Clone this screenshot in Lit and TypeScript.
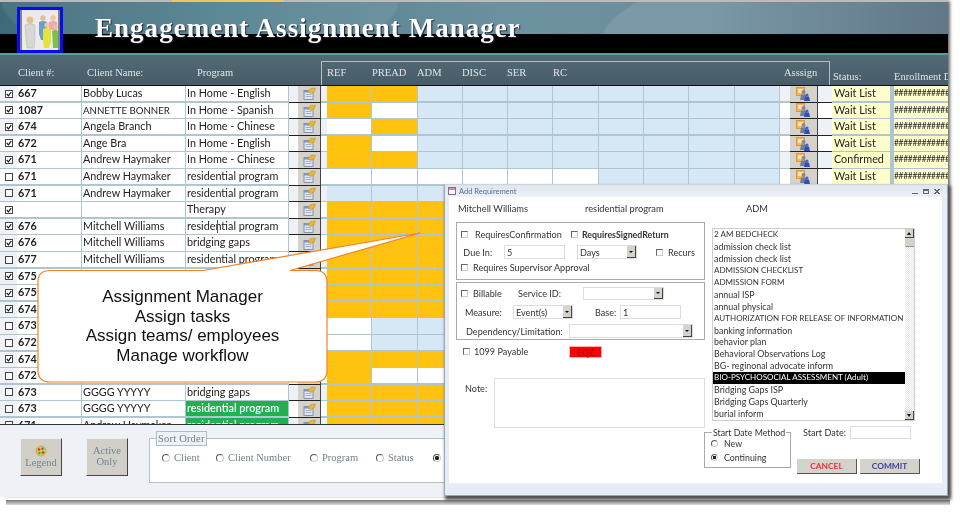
import { LitElement, html, css, svg } from "lit";
import { customElement } from "lit/decorators.js";

type R = [boolean, string, string, string, string, boolean?];
const rows: R[] = [
  [true, "667", "Bobby Lucas", "In Home - English", "oobbbbbbbb"],
  [true, "1087", "ANNETTE BONNER", "In Home - Spanish", "owbbbbbbbb"],
  [true, "674", "Angela Branch", "In Home - Chinese", "wobbbbbbbb"],
  [true, "672", "Ange Bra", "In Home - English", "owbbbbbbbb"],
  [true, "671", "Andrew Haymaker", "In Home - Chinese", "oobbbbbbbb"],
  [false, "671", "Andrew Haymaker", "residential program", "wwwwwwbbbb"],
  [false, "671", "Andrew Haymaker", "residential program", "bbbbbbbbbb"],
  [true, "", "", "Therapy", "oooooooooo"],
  [true, "676", "Mitchell Williams", "residential program", "oooooooooo"],
  [true, "676", "Mitchell Williams", "bridging gaps", "oooooooooo"],
  [false, "677", "Mitchell Williams", "residential program", "oooooooooo"],
  [true, "675", "", "", "oooooooooo"],
  [true, "675", "", "", "oooooooooo"],
  [true, "674", "", "", "oooooooooo"],
  [false, "673", "", "", "wbbbbbbbbb"],
  [false, "672", "", "", "wbbbbbbbbb"],
  [true, "674", "", "", "oooooooooo"],
  [false, "672", "", "", "owwwwwwwww"],
  [false, "673", "GGGG YYYYY", "bridging gaps", "oooooooooo"],
  [false, "673", "GGGG YYYYY", "residential program", "oooooooooo", true],
  [false, "671", "Andrew Haymaker", "residential program", "oooooooooo", true],
];

const items = [
  "2 AM BEDCHECK", "admission check list", "admission check list", "ADMISSION CHECKLIST",
  "ADMISSION FORM", "annual ISP", "annual physical", "AUTHORIZATION FOR RELEASE OF INFORMATION",
  "banking information", "behavior plan", "Behavioral Observations Log", "BG- reginonal advocate inform",
  "BIO-PSYCHOSOCIAL ASSESSMENT (Adult)", "Bridging Gaps ISP", "Bridging Gaps Quarterly", "burial inform",
];
const isCaps = (t: string) => t.length > 12 && (t === t.toUpperCase() || t.startsWith("BIO"));

const noteIcon = svg`<svg width="13" height="13" viewBox="0 0 13 13">
  <rect x="1" y="3.500" width="9" height="9" fill="#dfe6f2" stroke="#6d80a8" stroke-width=".8"/>
  <rect x="1" y="3.500" width="9" height="2" fill="#7f95c4"/>
  <path d="M2.500 7.500h6M2.500 9.500h6" stroke="#93a3c4" stroke-width=".8"/>
  <path d="M5 5 L7.500 1.500 L12.500 1 L11.500 4.500 L8 6.500 Z" fill="#e8b92a" stroke="#a98614" stroke-width=".4"/>
</svg>`;

const assignIcon = svg`<svg width="14" height="14" viewBox="0 0 14 14">
  <rect x="0.500" y="0.500" width="8" height="8" fill="#f6b457" stroke="#e08a26" stroke-width=".8"/>
  <rect x="2" y="2" width="5" height="4" fill="#fde2b4"/>
  <circle cx="7.500" cy="5" r="2" fill="#7d8aa0"/>
  <path d="M4 13 L5 7.500 H10 L11 13 Z" fill="#6f7f99"/>
  <circle cx="11" cy="8" r="1.500" fill="#3f5fc9"/>
  <path d="M8 14 L9 9.500 H13 L14 14 Z" fill="#2e4cc4"/>
</svg>`;

const logo = svg`<svg width="40" height="40" viewBox="0 0 40 40">
  <rect width="40" height="40" fill="#ecebea"/>
  <rect x="0" width="2" height="40" fill="#7f8288"/><rect x="38" width="2" height="40" fill="#7f8288"/>
  <circle cx="10" cy="10" r="3.500" fill="#e8bf94"/>
  <path d="M5 15 Q10 12 15 15 L15 28 L14 38 L7 38 L6 28 Z" fill="#d6d6d4" stroke="#b4b4b2" stroke-width=".5"/>
  <circle cx="23" cy="8" r="2.800" fill="#e8bf94"/>
  <path d="M19 12 Q23 10 27 12 L27 24 L25 30 L21 30 L19 24 Z" fill="#6d9cd2"/>
  <circle cx="33" cy="8" r="2.800" fill="#f0c8a0"/>
  <path d="M29 12 Q33 10 37 12 L37 20 L29 20 Z" fill="#e8a9b0"/>
  <circle cx="27" cy="15" r="2.600" fill="#f0c8a0"/>
  <path d="M23 19 Q27 17 31 19 L31 32 L29 38 L24 38 L23 32 Z" fill="#e4e33c"/>
  <circle cx="35" cy="17" r="2.600" fill="#e8bf94"/>
  <path d="M32 21 Q35 19 38 21 L38 38 L33 38 Z" fill="#79c24f"/>
</svg>`;

const legendIcon = svg`<svg width="12" height="12" viewBox="0 0 12 12">
  <circle cx="6" cy="6" r="5" fill="#e6c44a" stroke="#b7902c" stroke-width=".6"/>
  <circle cx="4" cy="4.500" r="1.300" fill="#d43a2a"/><circle cx="7.500" cy="3.800" r="1.200" fill="#3a6fd4"/>
  <circle cx="4.500" cy="8" r="1.200" fill="#3aa64a"/><circle cx="8" cy="7.500" r="1.300" fill="#8a5a2a"/>
</svg>`;

const check = svg`<svg class="tick" viewBox="0 0 8 8"><path d="M1 4 L3.300 6.500 L7 1.300" fill="none" stroke="#111" stroke-width="1.500"/></svg>`;

@customElement("app-root")
export class AppRoot extends LitElement {
  static styles = css`
    :host { display: block; width: 960px; height: 512px; overflow: hidden; position: relative; background: #fff; font-family: Lato, "Open Sans", sans-serif; color: #222; filter: blur(.3px); }
    * { box-sizing: border-box; }
    .win { width: 948px; height: 497px; display: flex; flex-direction: column; box-shadow: 3px 0 3px -1px #666; }
    .under { position: absolute; left: 6px; top: 500px; width: 944px; height: 5px; background: linear-gradient(#777, #ddd); }
    .top { height: 2px; flex: none; background: linear-gradient(90deg, #bbb 172px, #f1c462 172px, #f1c462 284px, #bbb 284px); }
    .banner { height: 51px; flex: none; display: flex; background:
        linear-gradient(#000, #000) bottom / 100% 19px no-repeat,
        radial-gradient(ellipse 200px 70px at 800px 40px, rgba(255,255,255,.1) 98%, transparent 100%),
        radial-gradient(ellipse 200px 60px at 200px 0, rgba(255,255,255,.07) 98%, transparent 100%),
        linear-gradient(90deg, #3d6a78, #52808e 25%, #6d929f 55%, #6b8c9c 75%, #4e6879); }
    .logo { width: 46px; height: 46px; margin: 5px 0 0 17px; border: 3px solid #0a0af0; line-height: 0; }
    .title { margin: 11px 0 0 32px; font: bold 27px/30px "Liberation Serif", serif; letter-spacing: 1.03px; color: #fff; text-shadow: 1px 1px 1px #223; white-space: nowrap; }
    .rule { height: 2px; flex: none; background: #5f9a9c; }
    .heads { height: 31px; flex: none; background: linear-gradient(#536a75, #475c68); display: grid; grid-template-columns: 18px 69px 110px 124px 509px 1fr; color: #dfe5e8; font: 10.500px "Liberation Serif", serif; border-bottom: 1px solid #111; }
    .heads > div { padding-top: 12px; white-space: nowrap; }
    .heads .box { border: 1px solid #b5c0c6; border-bottom: 0; margin-top: 6px; padding-top: 5px; display: grid; grid-template-columns: 45px 45px 45px 45px 46px 231px 1fr; padding-left: 5px; }
    .heads .box span:last-child { white-space: nowrap; }
    .heads .rest { display: grid; grid-template-columns: 61px 1fr; padding: 16px 0 0 3px; overflow: hidden; }
    .rows { height: 338px; flex: none; overflow: hidden; background: #aec6cf; }
    .row { display: grid; height: 16.6px; grid-template-columns: 17px 65px 104px 103px 9px 23px 6px repeat(10, 45.3px) 10px 28px 14px 58px 4px 1fr; font-size: 10.800px; line-height: 14.6px; white-space: nowrap; }
    .row > div { height: 15.2px; overflow: hidden; }
    .sel { background: #eef1f6; display: flex; align-items: center; justify-content: center; }
    .sel.alt { background: #fff; }
    .cb { width: 8px; height: 8px; border: 1px solid #444; background: #fff; display: block; flex: none; }
    .tick { display: block; width: 6px; height: 6px; }
    .t { background: #fff; padding-left: 1px; margin-right: 1px; }
    .t.cap { font-size: 9.700px; }
    .id { font-weight: 700; }
    .pad { background: #eef1f6; }
    .pad.alt { background: #fff; }
    .pad.ln { border-bottom: 1px solid #222; height: 16.6px !important; }
    .btn { background: #d5d2cc; border-right: 1px solid #444; border-bottom: 1px solid #222; display: flex; justify-content: center; align-items: center; height: 16.6px !important; }
    .o { background: #ffc20e; margin-right: 1px; }
    .w { background: #fff; margin-right: 1px; }
    .b { background: #d6e8f5; margin-right: 1px; }
    .status { background: #ffffcc; padding-left: 2px; }
    .enr { background: #ffffcc; font-size: 8.500px; letter-spacing: -.3px; overflow: hidden; }
    .green { background: #1fb14f; color: #fff; font-weight: 600; }
    .caret { position: absolute; left: 217px; top: 220px; width: 1px; height: 13px; background: #555; }
    .foot { flex: 1; background: #eef1f6; display: flex; align-items: flex-start; padding: 13px 0 0 20px; border-top: 1px solid #333; }
    .fbtn { width: 42px; height: 38px; background: #d2cfc9; border-right: 1px solid #444; border-bottom: 1px solid #444; border-top: 1px solid #eee; border-left: 1px solid #eee; color: #70858f; font: 10.500px/11.500px "Liberation Serif", serif; display: flex; flex-direction: column; align-items: center; justify-content: center; text-align: center; }
    .active { margin-left: 24px; padding-bottom: 2px; }
    fieldset.sort { margin: -7px 0 0 21px; width: 400px; height: 52px; border: 1px solid #b8bec4; background: #fff; padding: 0 0 0 0; }
    fieldset.sort legend { margin-left: 6px; padding: 0 1px; border: 1px solid #a9c0cc; background: #eef1f6; color: #6f7f88; font: 10.500px/13px "Liberation Serif", serif; letter-spacing: .2px; }
    .radios { display: grid; grid-template-columns: 54px 94px 66px 57px 1fr; padding: 6px 0 0 12px; color: #6f7f88; font: 10.500px "Liberation Serif", serif; }
    .radios label { display: flex; align-items: center; gap: 4px; }
    .rd { width: 7px; height: 7px; border-radius: 50%; border: 1px solid #555; border-bottom-color: #ccc; border-right-color: #ccc; background: #fff; flex: none; display: block; }
    .radios .rd { width: 8px; height: 8px; }
    .rd.on { background: radial-gradient(circle, #222 45%, #fff 55%); }

    .callout { position: absolute; left: 0; top: 0; width: 440px; height: 400px; pointer-events: none; }
    .ctext { position: absolute; left: 38px; top: 287px; width: 289px; text-align: center; font: 17px/19.600px "Liberation Sans", sans-serif; color: #111; }

    .modal { position: absolute; left: 444px; top: 184px; width: 504px; height: 312px; background: #e6edf5; border: 1px solid #9aa6b0; border-top-color: #ccd4dc; box-shadow: 2px 3px 3px 1px #555; display: flex; flex-direction: column; font-size: 9.100px; color: #333; }
    .mtitle { height: 12px; flex: none; display: flex; align-items: center; gap: 3px; padding-left: 3px; color: #4f6f9f; font-size: 7.500px; background: linear-gradient(#dfe5ec, #eef2f7); }
    .mico { width: 8px; height: 8px; background: linear-gradient(#c98fb0, #c98fb0 2px, #fff 2px); border: 1px solid #8a6a8a; flex: none; }
    .ctl { margin-left: auto; margin-right: 7px; display: flex; gap: 5px; align-items: center; }
    .ctl i { display: block; width: 6px; height: 5px; }
    .ctl .mn { border-bottom: 1px solid #667; }
    .ctl .mx { border: 1px solid #667; border-top-width: 2px; }
    .ctl .cl { background: linear-gradient(45deg, transparent 44%, #667 44%, #667 56%, transparent 56%), linear-gradient(-45deg, transparent 44%, #667 44%, #667 56%, transparent 56%); }
    .mbody { height: 286px; flex: none; background: #fff; margin: 0 5px 0 4px; display: flex; flex-direction: column; padding-left: 7px; }
    .names { height: 25px; flex: none; display: grid; grid-template-columns: 127px 161px 1fr; padding: 6px 0 0 2px; font-size: 9.300px; }
    .cols { display: flex; }
    .left { width: 249px; flex: none; }
    .right { width: 220px; margin-left: 7px; padding-top: 6px; }
    .grp { border: 1px solid #aaa; height: 58px; padding: 4px 0 0 4px; display: flex; flex-direction: column; }
    .grp + .grp { margin-top: 2px; }
    .r { display: grid; align-items: center; white-space: nowrap; }
    .a1 { grid-template-columns: 14px 96px 11px 1fr; height: 13px; margin-top: 1px; }
    .a2 { grid-template-columns: 43px 61px 12px 60px 19px 12px 1fr; margin-top: 4px; height: 14px; }
    .a3 { grid-template-columns: 12px 1fr; margin-top: 2px; height: 13px; }
    .b1 { grid-template-columns: 12px 45px 65px 81px; height: 13px; }
    .b2 { grid-template-columns: 4px 48px 60px 22px 25px 61px; margin-top: 5px; height: 14px; }
    .b3 { grid-template-columns: 5px 103px 124px; margin-top: 5px; height: 14px; }
    .pay { grid-template-columns: 11px 95px 33px; margin: 5px 0 0 7px; height: 13px; }
    .mb { width: 7px; height: 7px; border: 1px solid #666; border-bottom-color: #ccc; border-right-color: #ccc; background: #fff; display: block; }
    .bold { font-weight: 700; font-size: 8.800px; }
    .in { height: 100%; border: 1px solid #ddd; padding-left: 2px; background: #fff; display: flex; align-items: center; }
    .dd { height: 100%; border: 1px solid #ddd; padding-left: 2px; display: flex; align-items: center; justify-content: space-between; }
    .arr { width: 9px; height: 100%; background: #d5d2cc; border-right: 1px solid #444; border-bottom: 1px solid #444; display: flex; align-items: center; justify-content: center; }
    .arr::after { content: ""; border: 2px solid transparent; border-top: 2.500px solid #111; border-bottom: 0; }
    .eqz { height: 12px; background: #ff0000; color: #8c0000; text-align: center; line-height: 12px; font-size: 8.500px; border: 1px solid #ffb0b0; }
    .noterow { display: grid; grid-template-columns: 38px 211px; margin-top: 20px; height: 50px; }
    .noterow span { padding: 5px 0 0 9px; }
    .notebox { border: 1px solid #ddd; }
    .list { position: relative; width: 203px; height: 193px; border: 1px solid #ccc; display: flex; }
    .opts { width: 192px; padding-top: 0; font-size: 8.900px; line-height: 11.950px; white-space: nowrap; }
    .opt { padding-left: 1px; height: 11.950px; }
    .opt.cap { font-size: 8.050px; }
    .opt.on { background: #000; color: #fff; }
    .sb { flex: 1; display: flex; flex-direction: column; justify-content: space-between; background: repeating-conic-gradient(#e4e4e4 0 25%, #fff 0 50%) 0 0 / 2px 2px; }
    .sb i { display: block; height: 9px; background: #d5d2cc; border-right: 1px solid #444; border-bottom: 1px solid #444; position: relative; }
    .sb i::after { content: ""; position: absolute; left: 2px; top: 3px; border: 2px solid transparent; border-bottom: 3px solid #111; border-top: 0; }
    .sb i.dn::after { border-top: 3px solid #111; border-bottom: 0; }
    .sb b { display: block; height: 9px; margin-bottom: auto; background: #d5d2cc; border-bottom: 1px solid #999; }
    .low { display: flex; }
    fieldset.sdm { margin: 6px 0 0 -8px; width: 87px; height: 41px; flex: none; border: 1px solid #aaa; padding: 0 0 0 6px; font-size: 8.800px; background: #fff; }
    fieldset.sdm legend { padding: 0 1px; margin-left: 1px; line-height: 11px; }
    .sdm div { display: flex; align-items: center; gap: 6px; height: 13.500px; position: relative; top: -1px; }
    .lowr { margin-left: 6px; display: flex; flex-direction: column; }
    .sd { display: grid; grid-template-columns: 47px 61px; height: 13px; margin: 5px 0 0 6px; align-items: center; }
    .acts { display: flex; gap: 3px; margin-top: 20px; }
    .act { width: 60px; height: 15px; background: #d5d2cc; border-right: 1px solid #555; border-bottom: 1px solid #555; text-align: center; font-weight: 700; font-size: 8.400px; line-height: 14px; }
    .cancel { color: #e8343c; }
    .commit { color: #3a42a8; }
  `;

  render() {
    return html`
      <div class="under"></div>
      <div class="win">
        <div class="top"></div>
        <div class="banner">
          <div class="logo">${logo}</div>
          <div class="title">Engagement Assignment Manager</div>
        </div>
        <div class="rule"></div>
        <div class="heads">
          <div></div><div>Client #:</div><div>Client Name:</div><div>Program</div>
          <div class="box"><span>REF</span><span>PREAD</span><span>ADM</span><span>DISC</span><span>SER</span><span>RC</span><span>Asssign</span></div>
          <div class="rest"><span>Status:</span><span>Enrollment Date</span></div>
        </div>
        <div class="rows">
          ${rows.map((r, i) => {
            const alt = i % 2 === 1 ? "alt" : "";
            const under = i >= 6;
            return html`<div class="row">
              <div class="sel ${i % 2 === 1 && i < 8 ? "alt" : ""}"><span class="cb">${r[0] ? check : ""}</span></div>
              <div class="t id">${r[1]}</div>
              <div class="t ${isCaps(r[2]) ? "cap" : ""}">${r[2]}</div>
              <div class="t ${r[5] ? "green" : ""}">${r[3]}</div>
              <div class="pad ln ${alt}"></div>
              <div class="btn">${noteIcon}</div>
              <div class="pad ${alt}"></div>
              ${[...r[4]].map((c) => html`<div class="${c}"></div>`)}
              <div class="pad ${alt}"></div>
              <div class="btn">${under ? "" : assignIcon}</div>
              <div class="pad ln ${alt}"></div>
              <div class="status">${under ? "" : i === 4 ? "Confirmed" : "Wait List"}</div>
              <div></div>
              <div class="enr">${under ? "" : "##############"}</div>
            </div>`;
          })}
        </div>
        <div class="foot">
          <div class="fbtn">${legendIcon}<span>Legend</span></div>
          <div class="fbtn active">Active<br />Only</div>
          <fieldset class="sort">
            <legend>Sort Order</legend>
            <div class="radios">
              <label><i class="rd"></i>Client</label>
              <label><i class="rd"></i>Client Number</label>
              <label><i class="rd"></i>Program</label>
              <label><i class="rd"></i>Status</label>
              <label><i class="rd on"></i>Date</label>
            </div>
          </fieldset>
        </div>
      </div>
      <div class="caret"></div>

      <svg class="callout" viewBox="0 0 440 400">
        <path d="M50 270.500 H203 L420 233 L290 270.500 H315 Q327 270.500 327 282 V370 Q327 382 315 382 H50 Q38 382 38 370 V282 Q38 270.500 50 270.500 Z" fill="#fff" stroke="#f58220" stroke-width="1.200"/>
      </svg>
      <div class="ctext">Assignment Manager<br />Assign tasks<br />Assign teams/ employees<br />Manage workflow</div>

      <div class="modal">
        <div class="mtitle"><i class="mico"></i>Add Requirement<span class="ctl"><i class="mn"></i><i class="mx"></i><i class="cl"></i></span></div>
        <div class="mbody">
          <div class="names"><span>Mitchell Williams</span><span>residential program</span><span>ADM</span></div>
          <div class="cols">
            <div class="left">
              <div class="grp">
                <div class="r a1"><i class="mb"></i><span>RequiresConfirmation</span><i class="mb"></i><span class="bold">RequiresSignedReturn</span></div>
                <div class="r a2"><span>&nbsp;Due In:</span><div class="in">5</div><span></span><div class="dd">Days<i class="arr"></i></div><span></span><i class="mb"></i><span>Recurs</span></div>
                <div class="r a3"><i class="mb"></i><span>Requires Supervisor Approval</span></div>
              </div>
              <div class="grp">
                <div class="r b1"><i class="mb"></i><span>Billable</span><span>Service ID:</span><div class="dd"><span></span><i class="arr"></i></div></div>
                <div class="r b2"><span></span><span>Measure:</span><div class="dd">Event(s)<i class="arr"></i></div><span></span><span>Base:</span><div class="in">1</div></div>
                <div class="r b3"><span></span><span>Dependency/Limitation:</span><div class="dd"><span></span><i class="arr"></i></div></div>
              </div>
              <div class="r pay"><i class="mb"></i><span>1099 Payable</span><div class="eqz">EQZ</div></div>
              <div class="noterow"><span>Note:</span><div class="notebox"></div></div>
            </div>
            <div class="right">
              <div class="list">
                <div class="opts">${items.map((t, i) => html`<div class="opt ${i === 12 ? "on" : ""} ${isCaps(t) ? "cap" : ""}">${t}</div>`)}</div>
                <div class="sb"><i></i><b></b><i class="dn"></i></div>
              </div>
              <div class="low">
                <fieldset class="sdm">
                  <legend>Start Date Method</legend>
                  <div><i class="rd"></i>New</div>
                  <div><i class="rd on"></i>Continuing</div>
                </fieldset>
                <div class="lowr">
                  <div class="sd"><span>Start Date:</span><div class="in"></div></div>
                  <div class="acts"><div class="act cancel">CANCEL</div><div class="act commit">COMMIT</div></div>
                </div>
              </div>
            </div>
          </div>
        </div>
      </div>
    `;
  }
}
